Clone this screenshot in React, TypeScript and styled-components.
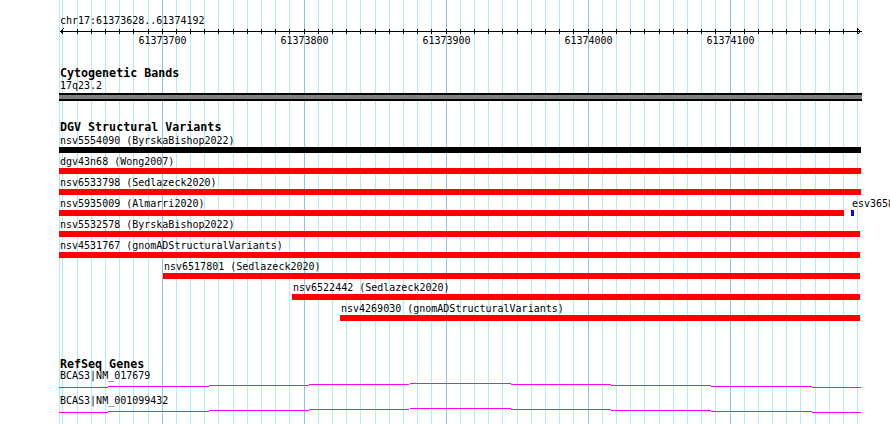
import React from 'react';
import styled, { createGlobalStyle } from 'styled-components';

/* -------------------------- data -------------------------- */
const START = 61373628;
const END = 61374192;
const PX_PER_BP = 1.4195;
const TRACK_X = 59;
const TRACK_W = 802;

// pixel position in panel coordinates
const toX = (bp: number) => 59.5 + (bp - START) * PX_PER_BP;

type Feature = { label: string; start: number; end: number; color: string };

const dgvRows: Feature[][] = [
  [{ label: 'nsv5554090 (ByrskaBishop2022)', start: START, end: END, color: '#000' }],
  [{ label: 'dgv43n68 (Wong2007)', start: START, end: END, color: '#ff0000' }],
  [{ label: 'nsv6533798 (Sedlazeck2020)', start: START, end: END, color: '#ff0000' }],
  [
    { label: 'nsv5935009 (Almarri2020)', start: START, end: 61374180, color: '#ff0000' },
    { label: 'esv3658', start: 61374186, end: 61374187, color: '#0000ff' },
  ],
  [{ label: 'nsv5532578 (ByrskaBishop2022)', start: START, end: END - 1, color: '#ff0000' }],
  [{ label: 'nsv4531767 (gnomADStructuralVariants)', start: START, end: END - 1, color: '#ff0000' }],
  [{ label: 'nsv6517801 (Sedlazeck2020)', start: 61373701, end: END - 1, color: '#ff0000' }],
  [{ label: 'nsv6522442 (Sedlazeck2020)', start: 61373792, end: END - 1, color: '#ff0000' }],
  [{ label: 'nsv4269030 (gnomADStructuralVariants)', start: 61373826, end: END - 1, color: '#ff0000' }],
];

const genes = ['BCAS3|NM_017679', 'BCAS3|NM_001099432'];

const gridLines: { x: number; major: boolean }[] = [{ x: 59, major: false }];
for (let bp = 61373630; bp <= END; bp += 10) {
  gridLines.push({ x: Math.round(toX(bp)), major: bp % 100 === 0 });
}
const majorTicks = gridLines.filter((g) => g.major);

/* -------------------------- styles -------------------------- */
const GlobalStyle = createGlobalStyle`
  html, body { margin: 0; padding: 0; background: #fff; overflow: hidden; }
`;

const Panel = styled.div`
  position: relative; width: 890px; height: 424px; overflow: hidden; background: #fff;
  font-family: 'DejaVu Sans Mono', 'Liberation Mono', monospace; font-size: 10px; color: #000;
`;
const GridLayer = styled.svg`
  position: absolute; left: 0; top: 0; width: 890px; height: 424px;
`;
const Tracks = styled.div`
  position: relative; margin-left: ${TRACK_X}px; width: ${TRACK_W}px;
`;

const Ruler = styled.div` padding-top: 15px; `;
const RangeLabel = styled.div` line-height: 12px; height: 12px; padding-left: 1px; white-space: nowrap; `;
const Axis = styled.svg` display: block; width: ${TRACK_W + 4}px; height: 8px; overflow: visible; `;
const TickLabels = styled.div` display: grid; height: 12px; line-height: 12px; `;
const TickLabel = styled.span`
  grid-area: 1 / 1; justify-self: start; white-space: nowrap; transform: translateX(-50%);
`;

const Track = styled.section<{ $top: number }>` margin-top: ${(p) => p.$top}px; `;
const TrackTitle = styled.div`
  font-weight: bold; font-size: 11.67px; line-height: 12px; height: 12px; padding-left: 1px; white-space: nowrap;
`;
const ItemLabel = styled.div<{ $top?: number }>`
  line-height: 12px; height: 12px; padding-left: 1px; white-space: nowrap; margin-top: ${(p) => p.$top ?? 0}px;
`;
const Band = styled.div`
  margin-top: 1px; width: ${TRACK_W + 1}px; height: 4px; background: #808080;
  border-top: 2px solid #000; border-bottom: 2px solid #000;
`;

const Rows = styled.div` margin-top: 2px; `;
const Row = styled.div` display: grid; height: 21px; `;
const FeatureBox = styled.div`
  grid-area: 1 / 1; justify-self: start; display: flex; flex-direction: column; align-items: flex-start;
`;
const FeatureLabel = styled.div` line-height: 12px; height: 12px; white-space: nowrap; padding-left: 1px; `;
const Bar = styled.div<{ $color: string }>` height: 6px; background: ${(p) => p.$color}; `;

const GeneLine = styled.svg` display: block; width: ${TRACK_W}px; height: 8px; margin-bottom: 5px; `;

/* ------------------------- component ------------------------ */
const App: React.FC = () => {
  return (
    <>
      <GlobalStyle />
      <Panel>
        <GridLayer viewBox="0 0 890 424" shapeRendering="crispEdges">
          {gridLines.map((g, i) => (
            <rect key={i} x={g.x} y={0} width={1} height={424} fill={g.major ? '#8cc3ea' : '#b0ecf0'} />
          ))}
        </GridLayer>

        <Tracks>
          <Ruler>
            <RangeLabel>chr17:61373628..61374192</RangeLabel>
            <Axis viewBox={`0 0 ${TRACK_W + 4} 8`} shapeRendering="crispEdges">
              <rect x={1} y={4} width={TRACK_W} height={1} fill="#000" />
              {gridLines.slice(1).map((g, i) => (
                <rect key={i} x={g.x - TRACK_X} y={2} width={1} height={5} fill="#000" />
              ))}
              <polyline points="4.5,1.5 1.5,4.5 4.5,7.5" fill="none" stroke="#000" />
              <polyline points="798.5,1.5 801.5,4.5 798.5,7.5" fill="none" stroke="#000" />
            </Axis>
            <TickLabels>
              {majorTicks.map((g, i) => (
                <TickLabel key={i} style={{ marginLeft: g.x - TRACK_X + 0.5 }}>
                  {61373700 + i * 100}
                </TickLabel>
              ))}
            </TickLabels>
          </Ruler>

          <Track $top={20}>
            <TrackTitle>Cytogenetic Bands</TrackTitle>
            <ItemLabel $top={1}>17q23.2</ItemLabel>
            <Band />
          </Track>

          <Track $top={20}>
            <TrackTitle>DGV Structural Variants</TrackTitle>
            <Rows>
              {dgvRows.map((row, ri) => (
                <Row key={ri}>
                  {row.map((f) => {
                    const left = Math.round(toX(f.start) - 0.5);
                    const right = Math.round(toX(f.end + 1) - 0.5);
                    return (
                      <FeatureBox key={f.label} style={{ marginLeft: left - TRACK_X }}>
                        <FeatureLabel>{f.label}</FeatureLabel>
                        <Bar $color={f.color} style={{ width: Math.max(1, right - left) }} />
                      </FeatureBox>
                    );
                  })}
                </Row>
              ))}
            </Rows>
          </Track>

          <Track $top={34}>
            <TrackTitle>RefSeq Genes</TrackTitle>
            {genes.map((g) => (
              <React.Fragment key={g}>
                <ItemLabel>{g}</ItemLabel>
                <GeneLine viewBox={`0 0 ${TRACK_W} 8`} shapeRendering="crispEdges">
                  <polyline points={`0,5.5 401,1.5 ${TRACK_W},5.5`} fill="none" stroke="#ff00ff" strokeWidth={1} />
                </GeneLine>
              </React.Fragment>
            ))}
          </Track>
        </Tracks>
      </Panel>
    </>
  );
};

export default App;
